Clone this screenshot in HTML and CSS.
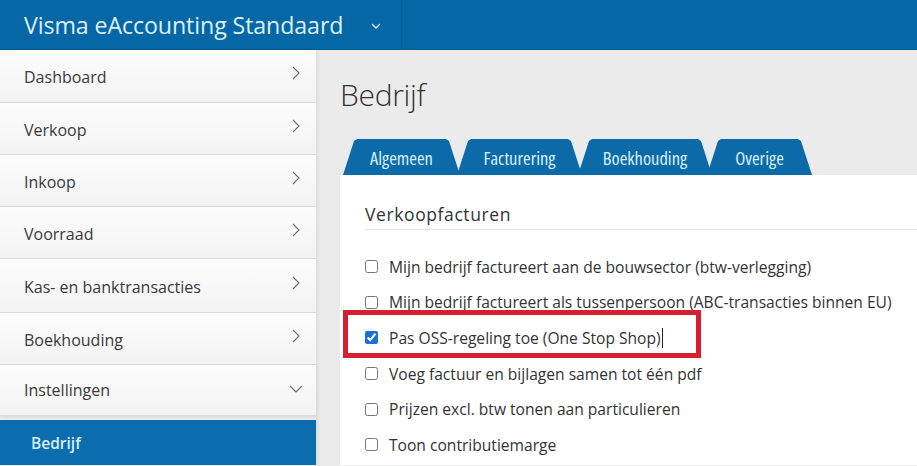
FILE: index.html
```html
<!DOCTYPE html>
<html lang="nl">
<head>
<meta charset="utf-8">
<title>Bedrijf</title>
<link rel="stylesheet" href="styles.css">
</head>
<body>
<header class="topbar">
  <div class="brand">
    <span class="brand-name">Visma eAccounting Standaard</span>
    <svg class="brand-chev" width="10" height="6" viewBox="0 0 10 6"><path d="M1 1 L5 5 L9 1" fill="none" stroke="#d8eefb" stroke-width="1.4"/></svg>
  </div>
</header>
<div class="layout">
  <nav class="sidebar">
    <ul class="menu">
      <li class="menu-item"><span>Dashboard</span><svg class="chev" width="8" height="14" viewBox="0 0 8 14"><path d="M1 1 L7 7 L1 13" fill="none" stroke="#6d6d6d" stroke-width="1.1"/></svg></li>
      <li class="menu-item"><span>Verkoop</span><svg class="chev" width="8" height="14" viewBox="0 0 8 14"><path d="M1 1 L7 7 L1 13" fill="none" stroke="#6d6d6d" stroke-width="1.1"/></svg></li>
      <li class="menu-item"><span>Inkoop</span><svg class="chev" width="8" height="14" viewBox="0 0 8 14"><path d="M1 1 L7 7 L1 13" fill="none" stroke="#6d6d6d" stroke-width="1.1"/></svg></li>
      <li class="menu-item"><span>Voorraad</span><svg class="chev" width="8" height="14" viewBox="0 0 8 14"><path d="M1 1 L7 7 L1 13" fill="none" stroke="#6d6d6d" stroke-width="1.1"/></svg></li>
      <li class="menu-item tall"><span>Kas- en banktransacties</span><svg class="chev" width="8" height="14" viewBox="0 0 8 14"><path d="M1 1 L7 7 L1 13" fill="none" stroke="#6d6d6d" stroke-width="1.1"/></svg></li>
      <li class="menu-item"><span>Boekhouding</span><svg class="chev" width="8" height="14" viewBox="0 0 8 14"><path d="M1 1 L7 7 L1 13" fill="none" stroke="#6d6d6d" stroke-width="1.1"/></svg></li>
      <li class="menu-item open"><span>Instellingen</span><svg class="chev-down" width="14" height="8" viewBox="0 0 14 8"><path d="M1 1 L7 7 L13 1" fill="none" stroke="#6d6d6d" stroke-width="1.1"/></svg></li>
    </ul>
    <div class="submenu-active">Bedrijf</div>
  </nav>
  <main class="main">
    <h1 class="page-title">Bedrijf</h1>
    <div class="tabs">
      <div class="tab t1">Algemeen</div>
      <div class="tab t2">Facturering</div>
      <div class="tab t3">Boekhouding</div>
      <div class="tab t4">Overige</div>
    </div>
    <section class="panel">
      <h2 class="section-title">Verkoopfacturen</h2>
      <ul class="options">
        <li class="option"><input type="checkbox"><span>Mijn bedrijf factureert aan de bouwsector (btw-verlegging)</span></li>
        <li class="option"><input type="checkbox"><span>Mijn bedrijf factureert als tussenpersoon (ABC-transacties binnen EU)</span></li>
        <li class="option"><input type="checkbox" checked><span>Pas OSS-regeling toe (One Stop Shop)</span><span class="caret"></span></li>
        <li class="option"><input type="checkbox"><span>Voeg factuur en bijlagen samen tot één pdf</span></li>
        <li class="option"><input type="checkbox"><span>Prijzen excl. btw tonen aan particulieren</span></li>
        <li class="option"><input type="checkbox"><span>Toon contributiemarge</span></li>
      </ul>
      <div class="highlight"></div>
    </section>
  </main>
</div>
</body>
</html>
```
FILE: styles.css
```css
* { box-sizing: border-box; }
html, body { margin: 0; padding: 0; height: 100%; overflow: hidden; }
body {
  font-family: "Open Sans", "Liberation Sans", sans-serif;
  color: #333;
  background: #ebebeb;
}
.topbar {
  height: 50px;
  background: #0567a5;
  border-bottom: 1px solid #0a5a8f;
  display: flex;
}
.brand {
  width: 402px;
  display: flex;
  align-items: center;
  padding-left: 24px;
  border-right: 1px solid #0a5c93;
}
.brand-name {
  font-size: 23.2px;
  color: #dcf1fb;
  letter-spacing: -0.1px;
}
.brand-chev { margin-left: 28px; margin-top: 2px; }
.layout {
  display: flex;
  height: calc(100% - 50px);
}
.sidebar {
  width: 316px;
  flex: none;
  background: #ebebeb;
  box-shadow: 2px 0 4px rgba(0,0,0,0.06);
  position: relative;
  z-index: 1;
}
.menu { list-style: none; margin: 0; padding: 0; }
.menu-item {
  height: 52px;
  display: flex;
  align-items: center;
  justify-content: space-between;
  padding: 3px 16px 0 24px;
  font-size: 16px;
  color: #3a3a3a;
  background: linear-gradient(#fcfcfc, #f3f3f3);
  border-bottom: 1px solid #dadada;
}
.menu-item:first-child { height: 53px; padding-top: 2px; }
.menu-item.tall { height: 54px; }
.menu-item .chev { margin-top: -8px; }
.menu-item.open { box-shadow: 0 2px 3px rgba(0,0,0,0.08); border-bottom: none; height: 50px; padding-top: 0; }
.chev-down { margin-right: -3px; margin-top: -2px; }
.submenu-active {
  margin-top: 5px;
  height: 45px;
  background: #0b6dae;
  color: #d6f1fd;
  font-weight: 600;
  font-size: 15.5px;
  display: flex;
  align-items: center;
  padding-left: 31px;
}
.main {
  flex: 1;
  padding: 24px 0 0 24px;
  min-width: 0;
}
.page-title {
  margin: 0;
  font-size: 30px;
  font-weight: 300;
  line-height: 42px;
  color: #333;
  letter-spacing: -0.3px;
}
.tabs {
  display: flex;
  margin-top: 23px;
  padding-left: 3px;
  height: 36px;
}
.tab {
  height: 36px;
  background: #0c6aa8;
  color: #d8f0fc;
  font-size: 18.5px;
  font-stretch: 76%;
  display: flex;
  align-items: center;
  justify-content: center;
  clip-path: polygon(0 100%, 11px 2px, 14px 0, calc(100% - 14px) 0, calc(100% - 11px) 2px, 100% 100%);
  padding-top: 1px;
}
.t1 { width: 117px; }
.t2 { width: 125px; margin-left: -3px; }
.t3 { width: 134px; margin-left: -4px; }
.t4 { width: 105px; margin-left: -5px; }
.panel {
  background: #fff;
  position: relative;
  padding: 0 0 0 25px;
  height: calc(100% - 102px);
}
.section-title {
  margin: 0;
  padding-top: 27px;
  padding-bottom: 3px;
  font-size: 17.5px;
  font-weight: 400;
  line-height: 24px;
  color: #333;
  letter-spacing: 0.6px;
  border-bottom: 1px solid #e2e2e2;
}
.options { list-style: none; margin: 19px 0 0 0; padding: 0; }
.option {
  height: 35.6px;
  display: flex;
  align-items: center;
  font-size: 15.6px;
  color: #333;
}
.option input {
  width: 13px;
  height: 13px;
  margin: 0 11px 0 0;
  accent-color: #1a6fd6;
}
.caret {
  width: 1px;
  height: 20px;
  background: #222;
  margin-left: 1px;
}
.highlight {
  position: absolute;
  left: 3px;
  top: 135px;
  width: 358px;
  height: 48px;
  border: 5px solid #d4202f;
  pointer-events: none;
}
```
